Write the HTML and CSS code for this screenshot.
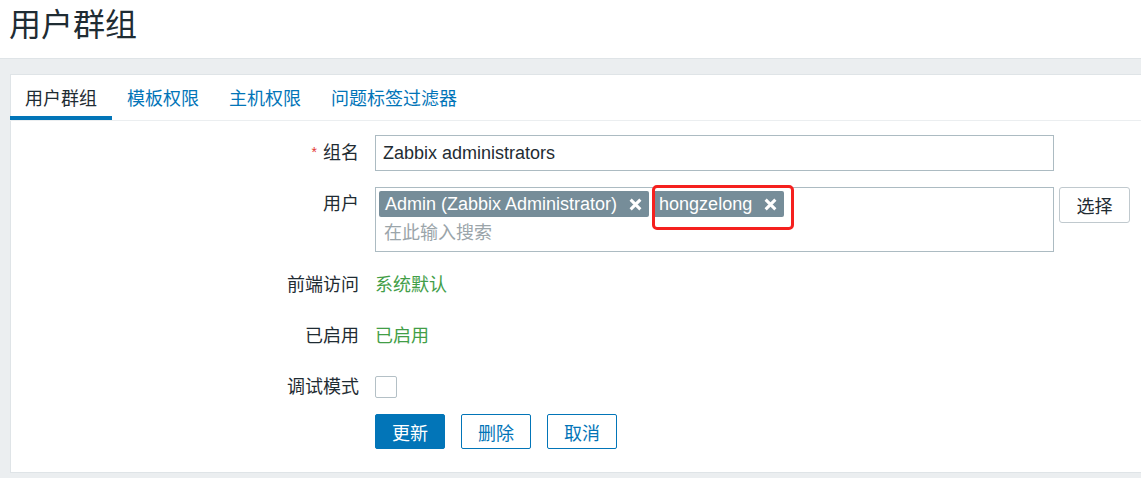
FILE: index.html
```html
<!DOCTYPE html>
<html lang="zh">
<head>
<meta charset="utf-8">
<title>用户群组</title>
<link rel="stylesheet" href="styles.css">
</head>
<body>
<header class="page-header">
  <h1 class="page-title">用户群组</h1>
</header>
<main class="page-body">
  <section class="panel">
    <nav class="tabs">
      <a class="tab tab-active">用户群组</a>
      <a class="tab">模板权限</a>
      <a class="tab">主机权限</a>
      <a class="tab">问题标签过滤器</a>
    </nav>
    <form class="form">
      <div class="row">
        <label class="label"><span class="req">*</span>组名</label>
        <div class="field">
          <div class="text-input">Zabbix administrators</div>
        </div>
      </div>
      <div class="row row-top">
        <label class="label">用户</label>
        <div class="field field-ms">
          <div class="multiselect">
            <div class="tags">
              <span class="tag">Admin (Zabbix Administrator)<svg class="tag-x" viewBox="0 0 12 12"><path d="M1.5 1.5L10.5 10.5M10.5 1.5L1.5 10.5"/></svg></span>
              <span class="tag">hongzelong<svg class="tag-x" viewBox="0 0 12 12"><path d="M1.5 1.5L10.5 10.5M10.5 1.5L1.5 10.5"/></svg></span>
            </div>
            <div class="ms-search">在此输入搜索</div>
            <div class="highlight"></div>
          </div>
          <button type="button" class="btn-select">选择</button>
        </div>
      </div>
      <div class="row">
        <label class="label">前端访问</label>
        <div class="field"><span class="green">系统默认</span></div>
      </div>
      <div class="row">
        <label class="label">已启用</label>
        <div class="field"><span class="green">已启用</span></div>
      </div>
      <div class="row">
        <label class="label">调试模式</label>
        <div class="field"><span class="checkbox"></span></div>
      </div>
      <div class="row row-buttons">
        <div class="label"></div>
        <div class="field buttons">
          <button type="button" class="btn btn-primary">更新</button>
          <button type="button" class="btn btn-alt">删除</button>
          <button type="button" class="btn btn-alt">取消</button>
        </div>
      </div>
    </form>
  </section>
</main>
</body>
</html>
```

FILE: styles.css
```css
* { box-sizing: border-box; }
html, body {
  margin: 0;
  padding: 0;
  background: #ebeef0;
  overflow: hidden;
}
body {
  font-family: "Liberation Sans", Arial, "Noto Sans CJK SC", sans-serif;
  color: #1f2c33;
  font-size: 18px;
}
.page-header {
  background: #ffffff;
  height: 59px;
  border-bottom: 1px solid #dfe4e7;
  padding-left: 9px;
}
.page-title {
  margin: 0;
  font-size: 32px;
  font-weight: normal;
  line-height: 51px;
  color: #1f2c33;
}
.page-body {
  padding: 15px 0 7px 10px;
}
.panel {
  background: #ffffff;
  border: 1px solid #dfe4e7;
  border-right: none;
  padding-bottom: 23px;
}
.tabs {
  display: flex;
  border-bottom: 1px solid #ebeef0;
  margin-left: -1px;
}
.tab {
  display: block;
  padding: 7px 15px 0;
  line-height: 34px;
  border-bottom: 4px solid transparent;
  color: #0275b8;
  cursor: pointer;
}
.tab-active {
  color: #1f2c33;
  border-bottom-color: #0275b8;
}
.form {
  padding-top: 14px;
  display: flex;
  flex-direction: column;
  gap: 16px;
}
.row {
  display: flex;
  align-items: center;
  min-height: 35px;
}
.row-top { align-items: flex-start; }
.row-buttons { margin-top: -7px; }
.label {
  width: 364px;
  flex: none;
  text-align: right;
  padding-right: 16px;
  line-height: 35px;
  color: #1f2c33;
}
.req {
  color: #e33734;
  font-size: 14px;
  margin-right: 6px;
  vertical-align: 2px;
}
.field {
  display: flex;
  align-items: center;
}
.field-ms { align-items: flex-start; }
.text-input {
  width: 679px;
  height: 36px;
  border: 1px solid #acbbc2;
  padding: 0 7px;
  line-height: 34px;
  color: #1f2c33;
}
.multiselect {
  position: relative;
  width: 679px;
  height: 65px;
  border: 1px solid #acbbc2;
  padding: 3px 3px 5px;
}
.tags {
  display: flex;
  gap: 4px;
}
.tag {
  display: flex;
  align-items: center;
  height: 26px;
  background: #768d99;
  color: #ffffff;
  border-radius: 2px;
  padding: 0 7px 0 6px;
  line-height: 26px;
}
.tag-x {
  flex: none;
  width: 13px;
  height: 13px;
  margin-left: 12px;
  fill: none;
  stroke: #ffffff;
  stroke-width: 2.8;
}
.ms-search {
  margin-top: 4px;
  height: 24px;
  line-height: 24px;
  padding-left: 5px;
  color: #9ba5aa;
}
.highlight {
  position: absolute;
  left: 276px;
  top: -3px;
  width: 142px;
  height: 45px;
  border: 3px solid #f5201e;
  border-radius: 5px;
}
.btn-select {
  margin-left: 5px;
  width: 71px;
  height: 36px;
  background: #ffffff;
  border: 1px solid #c0c9ce;
  border-radius: 3px;
  font: inherit;
  color: #1f2c33;
  padding: 0;
}
.green { color: #429e47; line-height: 35px; }
.checkbox {
  display: block;
  width: 22px;
  height: 22px;
  border: 1px solid #b4c0c6;
  border-radius: 2px;
  background: #ffffff;
  margin-top: -2px;
}
.buttons { gap: 16px; }
.btn {
  width: 70px;
  height: 35px;
  border-radius: 2px;
  font: inherit;
  padding: 0;
}
.btn-primary {
  background: #0275b8;
  border: 1px solid #0275b8;
  color: #ffffff;
}
.btn-alt {
  background: #ffffff;
  border: 1px solid #0275b8;
  color: #0275b8;
}
```
